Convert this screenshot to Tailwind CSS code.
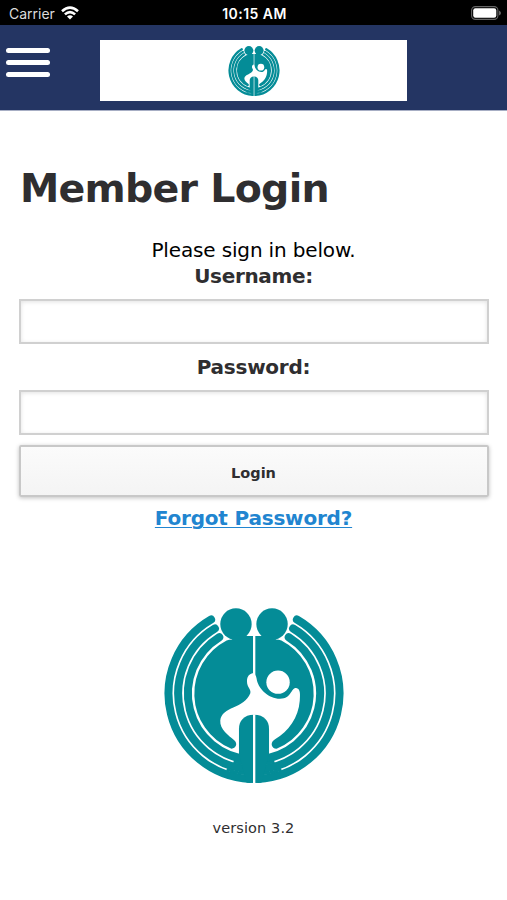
<!DOCTYPE html>
<html lang="en">

<head>
    <meta charset="UTF-8">
    <meta name="viewport" content="width=device-width, initial-scale=1.0">
    <title>Member Login</title>
    <script src="https://cdn.jsdelivr.net/npm/@tailwindcss/browser@4"></script>
</head>

<body class="bg-white font-['DejaVu_Sans',sans-serif] text-[#2f2e30]">

    <!-- Logo shape, used in the header and above the version -->
    <svg class="hidden">
        <symbol id="logo" viewBox="28 24 538 524">
            <g fill="none" stroke="#048c97" stroke-width="24">
                <path stroke-linecap="round" d="M168.500 58.600A256 256 0 0 0 285 535.700" />
                <path stroke-linecap="round" d="M180 85.500A227 227 0 0 0 285 506.700" />
                <path stroke-linecap="round" d="M193 111.500A198 198 0 0 0 285 477.600" />
                <path d="M215 507.200A241.500 241.500 0 0 0 294 521.500M236 483.600A212.500 212.500 0 0 0 294 492.500" stroke-width="9" />
                <path stroke-linecap="round" d="M425.500 58.600A256 256 0 0 1 309 535.700" />
                <path stroke-linecap="round" d="M414 85.500A227 227 0 0 1 309 506.700" />
                <path stroke-linecap="round" d="M401 111.500A198 198 0 0 1 309 477.600" />
                <path d="M379 507.200A241.500 241.500 0 0 1 300 521.500M358 483.600A212.500 212.500 0 0 1 300 492.500" stroke-width="9" />
            </g>
            <g fill="#048c97">
                <circle cx="243" cy="72" r="47" />
                <circle cx="351" cy="72" r="47" />
                <path d="M297 108H274L262 104L228 108L232 118Q222 118 215 121A179 179 0 0 0 228 445Q239 446 243 436Q246 427 237 419C222 407 194 388 196 361C198 340 216 330 235 322C258 311 276 302 286 279C289 266 276 262 276 244C276 228 284 220 297 219Z" />
                <path d="M297 108H320L332 104L366 108L362 118Q372 118 379 121A179 179 0 0 1 366 445Q353 446 350 434Q349 424 360 417C401 393 430 353 434 302C435 286 437 266 425 264C406 261 412 296 375 296C340 296 312 266 306 242C304 230 303 224 297 220Z" />
                <path d="M297 344C266 344 252 363 252 386V462L275 547L297 548L319 547L342 462V386C342 363 328 344 297 344Z" />
            </g>
            <circle cx="369" cy="246" r="35" fill="#fff" />
            <path d="M297.500 106V226M297.500 342V550" stroke="#fff" stroke-width="7" />
        </symbol>
    </svg>

    <!-- Status bar -->
    <div class="h-[25px] bg-black text-white grid grid-cols-3 items-center pt-[3px] pl-[9px] pr-[6px] font-[Inter,sans-serif] text-[14px] leading-none">
        <div class="flex items-center gap-[6px]">
            <span class="text-[#dcdcdc]">Carrier</span>
            <svg class="w-[18px] h-[14px] -mt-[2px]" viewBox="0 0 18 14" fill="none" stroke="#fff" stroke-width="2.600">
                <path d="M1 5.200Q9-2 17 5.200" />
                <path d="M3.900 8.400Q9 3.800 14.100 8.400" />
                <path d="M9 13.500L6 10.500Q9 8 12 10.500Z" fill="#fff" stroke="none" />
            </svg>
        </div>
        <span class="text-center font-semibold whitespace-nowrap tracking-[0.45px] -ml-px">10:15 AM</span>
        <svg class="w-[30px] h-[14px] justify-self-end -mt-[2px]" viewBox="0 0 30 14">
            <rect x=".6" y=".6" width="26.300" height="12.800" rx="3.800" fill="none" stroke="#666" stroke-width="1.100" />
            <rect x="2.200" y="2.200" width="23.100" height="9.600" rx="2.200" fill="#fff" />
            <path d="M28 4.500Q30 5.500 30 7T28 9.500Z" fill="#666" />
        </svg>
    </div>

    <!-- Header -->
    <header class="h-[86px] bg-[#243563] border-b border-[#a7aec4] flex items-start pl-[6px] pt-[15px]">
        <button class="w-11 mt-[8px] flex flex-col gap-[7px]" aria-label="Menu">
            <span class="h-[5px] w-full rounded-full bg-white"></span>
            <span class="h-[5px] w-full rounded-full bg-white"></span>
            <span class="h-[5px] w-full rounded-full bg-white"></span>
        </button>
        <div class="ml-[50px] w-[307px] h-[61px] bg-white flex justify-center pt-[6px]">
            <svg class="w-[52px] h-[50px]"><use href="#logo" /></svg>
        </div>
    </header>

    <main class="px-[19px] pt-[52px] flex flex-col items-center">
        <h1 class="self-start ml-px text-[39.500px] leading-[50px] font-bold tracking-[-0.750px]">Member Login</h1>
        <p class="mt-[24px] text-[20px] leading-[27px] text-black tracking-[-0.15px]">Please sign in below.</p>
        <label for="username" class="text-[20px] leading-[24px] font-bold tracking-[-0.35px]">Username:</label>
        <input id="username" type="text" class="mt-[11px] w-[470px] h-[45px] border-2 border-[#d0d0d0] px-2 shadow-[inset_0_1px_4px_rgba(0,0,0,0.12)]">
        <label for="password" class="mt-[11px] text-[20px] leading-[24px] font-bold tracking-[-0.25px]">Password:</label>
        <input id="password" type="password" class="mt-[11px] w-[470px] h-[45px] border-2 border-[#d0d0d0] px-2 shadow-[inset_0_1px_4px_rgba(0,0,0,0.12)]">
        <button class="mt-[10px] w-[470px] h-[52px] border-2 border-[#c8c8c8] rounded-[2px] bg-linear-to-b from-[#fbfbfb] to-[#f4f4f4] shadow-[0_1px_4px_rgba(0,0,0,0.25)] text-[14.500px] font-bold pt-[6px]">Login</button>
        <a href="#" class="mt-[8px] text-[20px] leading-[26px] font-bold text-[#2185d0] tracking-[-0.2px] underline decoration-1 underline-offset-[2px]">Forgot Password?</a>
        <svg class="mt-[77px] w-[180px] h-[175px]"><use href="#logo" /></svg>
        <p class="mt-[35px] text-[14.500px] leading-[20px] tracking-[0.1px]">version 3.2</p>
    </main>
</body>

</html>
